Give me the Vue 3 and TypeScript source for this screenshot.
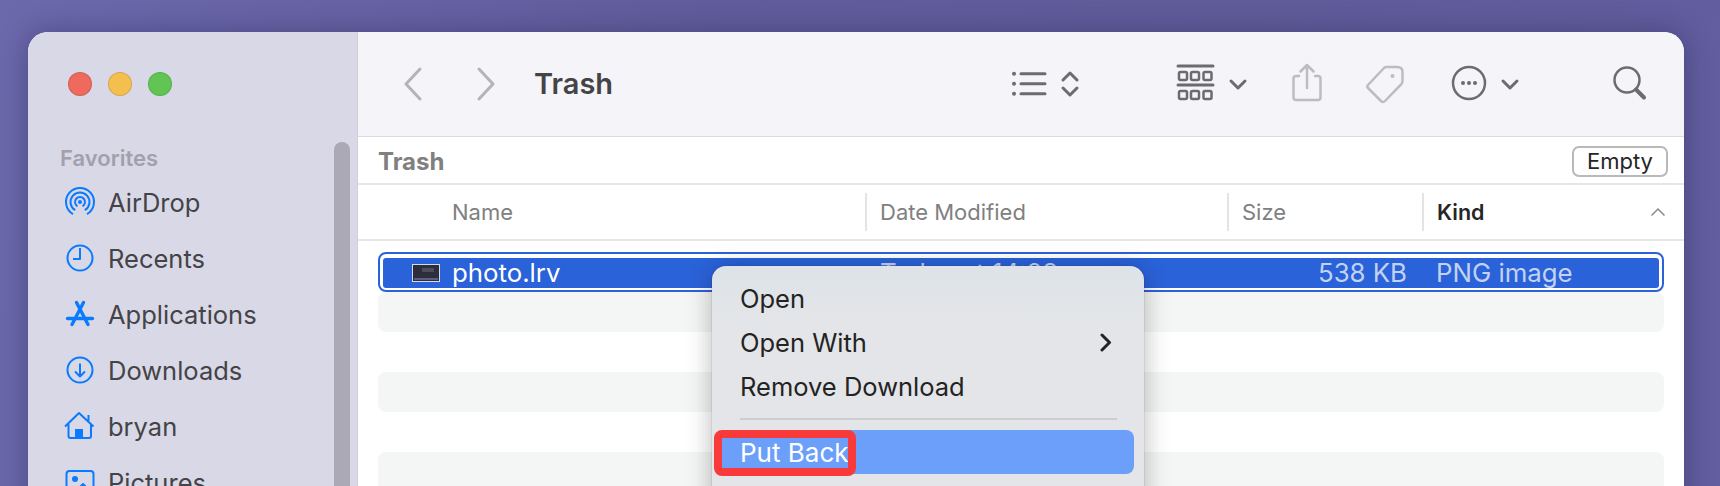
<template>
  <div class="desktop">
    <div class="window">
      <aside class="sidebar">
        <div class="lights">
          <span class="light red"></span>
          <span class="light yellow"></span>
          <span class="light green"></span>
        </div>
        <div class="side-label">Favorites</div>
        <div v-for="item in favorites" :key="item.name" class="side-item">
          <svg class="side-icon" viewBox="0 0 32 32" v-html="item.icon"></svg>
          <span>{{ item.name }}</span>
        </div>
        <div class="scrollbar"></div>
      </aside>

      <main class="main">
        <header class="toolbar">
          <svg class="tool nav" width="100" height="44" viewBox="400 62 100 44">
            <path d="M420 69 L406 84 L420 99" />
            <path d="M479 69 L493 84 L479 99" />
          </svg>
          <h1 class="title">Trash</h1>
          <svg class="tool view" width="70" height="44" viewBox="1010 62 70 44">
            <circle class="fill" cx="1014" cy="73.7" r="2" />
            <circle class="fill" cx="1014" cy="83.7" r="2" />
            <circle class="fill" cx="1014" cy="93.7" r="2" />
            <path d="M1021 73.7 H1045 M1021 83.7 H1045 M1021 93.7 H1045" />
            <path d="M1063 80 L1070 73 L1077 80 M1063 88 L1070 95 L1077 88" />
          </svg>
          <svg class="tool group" width="72" height="44" viewBox="1176 62 72 44">
            <path d="M1178 66 H1213 M1178 85 H1213" />
            <g class="thin">
              <rect x="1179" y="72" width="8" height="8" rx="1.5" />
              <rect x="1191" y="72" width="8" height="8" rx="1.5" />
              <rect x="1203.5" y="72" width="8" height="8" rx="1.5" />
              <rect x="1179" y="91" width="8" height="8" rx="1.5" />
              <rect x="1191" y="91" width="8" height="8" rx="1.5" />
              <rect x="1203.5" y="91" width="8" height="8" rx="1.5" />
            </g>
            <path d="M1231 81 L1238 88 L1245 81" />
          </svg>
          <svg class="tool off share" width="34" height="44" viewBox="1290 62 34 44">
            <path d="M1299 76 H1296 Q1293.500 76 1293.500 78.500 V97.500 Q1293.500 100 1296 100 H1318 Q1320.500 100 1320.500 97.500 V78.500 Q1320.500 76 1318 76 H1315" />
            <path d="M1307 88 V65 M1300.500 71.500 L1307 65 L1313.500 71.500" />
          </svg>
          <svg class="tool off tag" width="42" height="44" viewBox="1364 62 42 44">
            <path d="M1368 85 L1384 68 Q1385 67 1387 67 H1397 Q1402.500 67 1402.500 72 V81 Q1402.500 83 1401 84.500 L1385 101 Q1383 103 1381 101 L1368 88 Q1366.500 86.500 1368 85 Z" />
            <circle class="dot" cx="1392.500" cy="76" r="2" />
          </svg>
          <svg class="tool more" width="69" height="44" viewBox="1451 62 69 44">
            <circle cx="1469" cy="83" r="16" />
            <circle class="fill" cx="1463" cy="83" r="2" />
            <circle class="fill" cx="1469" cy="83" r="2" />
            <circle class="fill" cx="1475" cy="83" r="2" />
            <path d="M1503 81 L1510 88 L1517 81" />
          </svg>
          <svg class="tool search" width="37" height="44" viewBox="1611 62 37 44">
            <circle cx="1627" cy="80" r="12.500" />
            <path class="heavy" d="M1636 89.500 L1644 97.500" />
          </svg>
        </header>

        <div class="pathbar">
          <span class="path-title">Trash</span>
          <button class="empty" type="button">Empty</button>
        </div>

        <div class="columns">
          <div class="col col-name">Name</div>
          <div class="col col-date">Date Modified</div>
          <div class="col col-size">Size</div>
          <div class="col col-kind">
            <span>Kind</span>
            <svg class="sort" width="16" height="10" viewBox="0 0 16 10"><path d="M1.500 8.500 L8 2 L14.500 8.500" /></svg>
          </div>
        </div>

        <div class="list">
          <div class="row selected">
            <div class="row-fill">
              <span class="thumb"><i></i><b></b></span>
              <span class="cell-name">photo.lrv</span>
              <span class="cell-date">Today at 14:23</span>
              <span class="cell-size">538 KB</span>
              <span class="cell-kind">PNG image</span>
            </div>
          </div>
          <div v-for="n in 5" :key="n" class="row" :class="{ stripe: n % 2 === 1 }"></div>
        </div>
      </main>

      <div class="menu">
        <div class="menu-item">Open</div>
        <div class="menu-item">
          <span>Open With</span>
          <svg class="submenu" width="12" height="19" viewBox="0 0 12 19"><path d="M2 2 L9.500 9.500 L2 17" /></svg>
        </div>
        <div class="menu-item">Remove Download</div>
        <div class="menu-sep"></div>
        <div class="menu-item active">
          <span class="active-label">Put Back</span>
          <span class="callout"></span>
        </div>
      </div>
    </div>
  </div>
</template>

<script setup lang="ts">
interface SideItem {
  name: string;
  icon: string;
}

const favorites: SideItem[] = [
  {
    name: "AirDrop",
    icon: '<path d="M9 28.100 A14 14 0 1 1 23 28.100 M11.200 24.200 A9.500 9.500 0 1 1 20.800 24.200 M13.500 20.300 A5 5 0 1 1 18.500 20.300"/><circle class="solid" cx="16" cy="16" r="2"/>',
  },
  {
    name: "Recents",
    icon: '<circle cx="16" cy="16" r="12.500"/><path d="M16 6 V17 H9"/>',
  },
  {
    name: "Applications",
    icon: '<path stroke-width="3.400" stroke-linecap="round" d="M12.500 4.500 L24 26.500 M19.500 4.500 L8 26.500 M3.500 20.500 H28.500"/>',
  },
  {
    name: "Downloads",
    icon: '<circle cx="16" cy="16" r="12.500"/><path d="M16 9.500 V22 M11 17.500 L16 22.500 L21 17.500"/>',
  },
  {
    name: "bryan",
    icon: '<path d="M1 16.500 L15 3 L29.500 16.500 M4.500 14 V26 Q4.500 28 6.500 28 H25 Q27 28 27 26 V14 M24.500 5 V11"/><rect class="solid" x="11" y="19" width="8" height="9"/>',
  },
  {
    name: "Pictures",
    icon: '<rect x="2.500" y="5" width="27" height="24" rx="3"/><circle class="solid" cx="11" cy="13" r="3"/><path d="M8 29 L19 18 L29 28"/>',
  },
];
</script>

<style>
html,
body {
  margin: 0;
  background: #625e9e;
}
</style>

<style scoped>
.desktop {
  height: 486px;
  overflow: hidden;
  padding: 32px 36px 0 28px;
  box-sizing: border-box;
  background: linear-gradient(100deg, #6b68ac 0%, #615d9c 40%, #605c9a 70%, #625e9f 100%);
  font-family: Inter, "Liberation Sans", sans-serif;
}

.window {
  position: relative;
  display: flex;
  height: 520px;
  border-radius: 20px;
  overflow: hidden;
  background: #fff;
  box-shadow: 0 0 28px rgba(30, 28, 70, 0.38);
}

.sidebar {
  position: relative;
  flex: 0 0 330px;
  box-sizing: border-box;
  padding-top: 40px;
  background: #d9d8e6;
  color: #444347;
  border-right: 1px solid #cfcfdb;
}

.lights {
  display: flex;
  gap: 16px;
  padding-left: 40px;
}

.light {
  width: 24px;
  height: 24px;
  box-sizing: border-box;
  border-radius: 50%;
  border: 1px solid rgba(0, 0, 0, 0.12);
}

.red {
  background: #ee6a5f;
}

.yellow {
  background: #f5bf4f;
}

.green {
  background: #61c554;
}

.side-label {
  margin: 49px 0 3px 32px;
  font-size: 22px;
  line-height: 26px;
  font-weight: 600;
  color: #a1a0ad;
}

.side-item {
  display: flex;
  align-items: center;
  gap: 12px;
  height: 56px;
  padding-left: 36px;
  font-size: 25.500px;
}

.side-icon {
  flex: none;
  width: 32px;
  height: 32px;
  fill: none;
  stroke: #0a7aff;
  stroke-width: 2;
  stroke-linejoin: round;
}

.side-icon :deep(.solid) {
  fill: #0a7aff;
  stroke: none;
}

.scrollbar {
  position: absolute;
  top: 110px;
  left: 306px;
  bottom: 0;
  width: 16px;
  border-radius: 8px 8px 0 0;
  background: #aba9b5;
}

.main {
  flex: 1;
  min-width: 0;
}

.toolbar {
  display: flex;
  align-items: center;
  height: 105px;
  padding-left: 42px;
  box-sizing: border-box;
  background: #f4f4f9;
  border-bottom: 1px solid #dcdcdf;
}

.tool {
  flex: none;
  fill: none;
  stroke: #6b6b70;
  stroke-width: 3;
  stroke-linecap: round;
  stroke-linejoin: round;
}

.tool .fill {
  fill: #6b6b70;
  stroke: none;
}

.tool .thin {
  stroke-width: 2.500;
}

.nav {
  stroke: #b4b4b6;
}

.off {
  stroke: #bdbdc0;
  stroke-width: 2.500;
}

.off .dot {
  fill: #bdbdc0;
  stroke: none;
}

.more circle {
  stroke-width: 2.500;
}

.search {
  stroke-width: 2.500;
}

.search .heavy {
  stroke-width: 4;
}

.title {
  flex: 1;
  margin: 0 0 2px 34px;
  font-size: 29px;
  font-weight: 600;
  color: #444446;
}

.group {
  margin-left: 96px;
}

.share {
  margin-left: 42px;
}

.tag {
  margin-left: 40px;
}

.more {
  margin-left: 45px;
}

.search {
  margin: 0 36px 0 91px;
}

.pathbar {
  display: flex;
  align-items: center;
  justify-content: space-between;
  height: 48px;
  box-sizing: border-box;
  padding: 2px 16px 0 20px;
  border-bottom: 2px solid #e6e6e6;
}

.path-title {
  font-size: 24px;
  font-weight: 700;
  color: #808080;
}

.empty {
  width: 96px;
  height: 31px;
  padding: 0;
  border: 2px solid #b9b9b9;
  border-radius: 7px;
  background: #fff;
  font-family: inherit;
  font-size: 22px;
  color: #252525;
}

.columns {
  display: grid;
  grid-template-columns: 507px 362px 195px 262px;
  align-items: center;
  height: 56px;
  box-sizing: border-box;
  border-bottom: 2px solid #e6e6e6;
  font-size: 22px;
  color: #808080;
}

.col {
  height: 38px;
  line-height: 38px;
  box-sizing: border-box;
  padding-left: 13px;
  border-left: 2px solid #e4e4e4;
}

.col-name {
  padding-left: 94px;
  border-left: 0;
}

.col-kind {
  display: flex;
  justify-content: space-between;
  align-items: center;
  padding-right: 18px;
  font-size: 21.500px;
  font-weight: 600;
  color: #262626;
}

.sort {
  fill: none;
  stroke: #8a8a8a;
  stroke-width: 1.500;
}

.list {
  padding: 11px 20px 0;
}

.row {
  height: 40px;
  border-radius: 8px;
}

.stripe {
  background: #f4f5f5;
}

.selected {
  box-sizing: border-box;
  padding: 4px 3px 2px;
  border: 2px solid #2a62d9;
  background: #fff;
}

.row-fill {
  display: flex;
  align-items: center;
  height: 100%;
  padding-left: 29px;
  border-radius: 3px;
  overflow: hidden;
  background: #2a62d9;
  font-size: 25.800px;
  line-height: 30px;
  color: #c3d2f3;
}

.thumb {
  position: relative;
  flex: none;
  width: 28px;
  height: 18px;
  margin-right: 12px;
  box-sizing: border-box;
  border: 1px solid #d4daea;
  background: #2d2e3c;
}

.thumb i {
  display: block;
  width: 12px;
  height: 4px;
  margin: 3px 0 0 9px;
  background: #4b4d5c;
}

.thumb b {
  position: absolute;
  left: 1px;
  right: 1px;
  bottom: 1px;
  height: 2px;
  background: #5a5e86;
}

.cell-name {
  flex: 0 0 428px;
  color: #fff;
}

.cell-date {
  flex: 0 0 359px;
}

.cell-size {
  flex: 0 0 168px;
  text-align: right;
}

.cell-kind {
  margin-left: 29px;
}

.menu {
  position: absolute;
  left: 684px;
  top: 234px;
  width: 432px;
  height: 400px;
  box-sizing: border-box;
  padding: 10px 10px 0 8px;
  border-radius: 14px;
  background: linear-gradient(180deg, #dde3e8 0, #e4e5e8 60px, #e5e5e8 100%);
  box-shadow: 0 4px 26px rgba(0, 0, 0, 0.28), 0 0 0 1px rgba(0, 0, 0, 0.06);
  font-size: 25.500px;
  color: #232323;
}

.menu-item {
  position: relative;
  display: flex;
  align-items: center;
  justify-content: space-between;
  height: 44px;
  padding: 0 22px 0 20px;
}

.submenu {
  fill: none;
  stroke: #232323;
  stroke-width: 3;
  stroke-linecap: round;
  stroke-linejoin: round;
}

.menu-sep {
  height: 2px;
  margin: 10px 17px 10px 20px;
  background: #cdcdcf;
}

.active {
  border-radius: 8px;
  background: #6b9ffa;
  color: #fff;
}

.active-label {
  font-size: 26px;
}

.callout {
  position: absolute;
  left: -6px;
  top: 0;
  width: 142px;
  height: 46px;
  box-sizing: border-box;
  border: 8px solid #f93a3a;
  border-radius: 8px;
}
</style>
